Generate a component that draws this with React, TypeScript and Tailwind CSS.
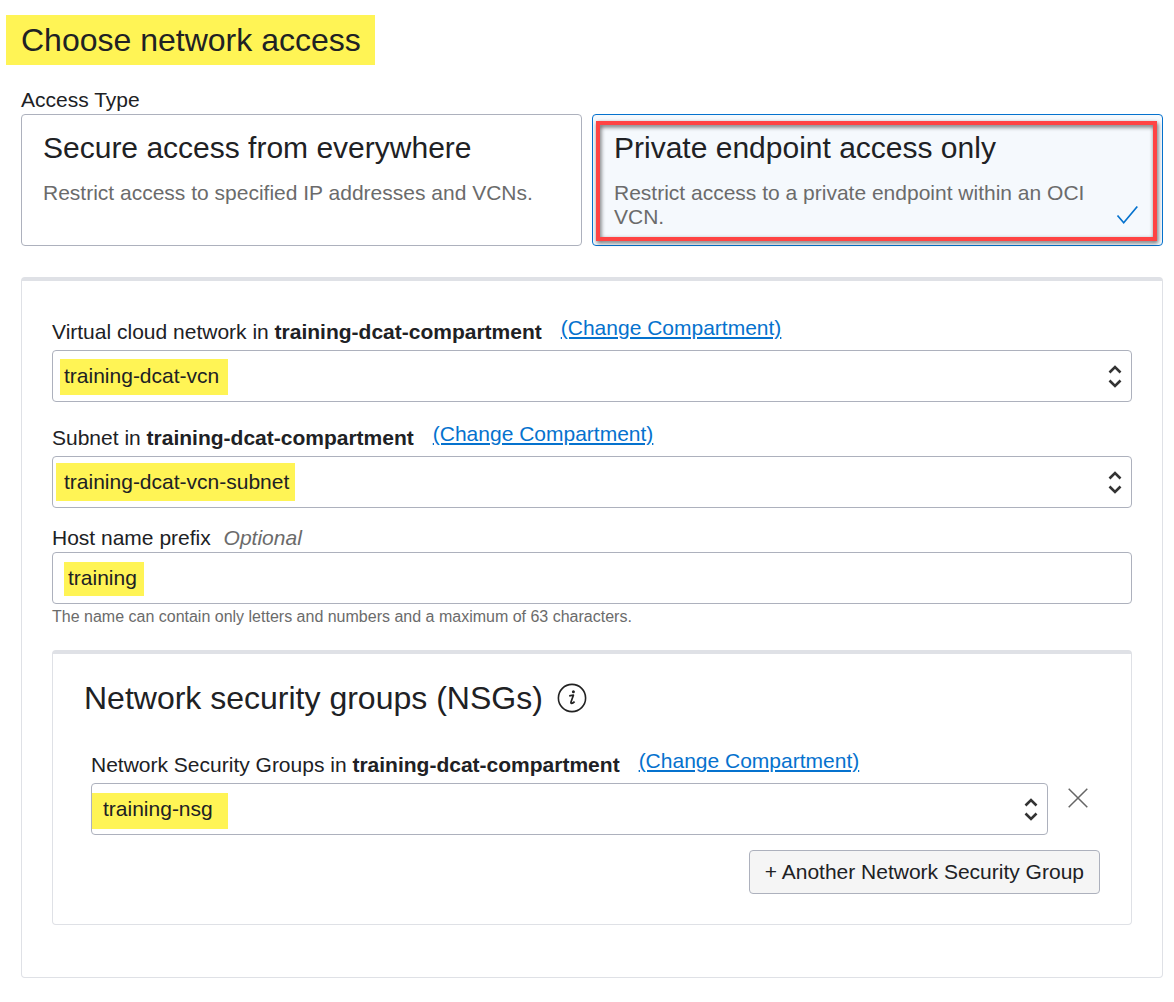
import { useState, type ReactNode } from "react";

function ChevronPair() {
  return (
    <svg
      className="pointer-events-none absolute top-1/2 right-[9px] -translate-y-1/2"
      width="16"
      height="26"
      viewBox="0 0 16 26"
      fill="none"
      stroke="#333333"
      strokeWidth="2.6"
      aria-hidden="true"
    >
      <path d="M2.5 9.5 L8 4 L13.5 9.5" />
      <path d="M2.5 17.5 L8 23 L13.5 17.5" />
    </svg>
  );
}

function CheckIcon() {
  return (
    <svg
      className="absolute right-6 bottom-5"
      width="22"
      height="20"
      viewBox="0 0 22 20"
      fill="none"
      stroke="#0572ce"
      strokeWidth="1.7"
      aria-hidden="true"
    >
      <path d="M1.5 10.5 L7.7 17.7 L21.3 1.5" />
    </svg>
  );
}

function InfoIcon() {
  return (
    <svg width="30" height="30" viewBox="0 0 30 30" fill="none" aria-hidden="true">
      <circle cx="15" cy="15" r="13.6" stroke="#222222" strokeWidth="1.6" />
      <circle cx="16.4" cy="8.8" r="1.5" fill="#222222" />
      <path
        d="M12.2 12.8 L16.4 12.2 L14 19 C13.5 20.8 15.2 20.9 17.6 18.6"
        stroke="#222222"
        strokeWidth="1.7"
        strokeLinejoin="round"
      />
    </svg>
  );
}

function CloseIcon() {
  return (
    <svg width="20" height="20" viewBox="0 0 20 20" stroke="#666666" strokeWidth="1.5" aria-hidden="true">
      <path d="M0.7 0.7 L19.3 19.3 M19.3 0.7 L0.7 19.3" />
    </svg>
  );
}

type CompartmentSelectProps = {
  id: string;
  label: string;
  value: string;
  highlight: string;
};

function CompartmentSelect({ id, label, value, highlight }: CompartmentSelectProps) {
  return (
    <div>
      <div className="flex h-[34px] items-start gap-[19px]">
        <label htmlFor={id} className="pt-1">
          {label} in <strong className="font-bold">training-dcat-compartment</strong>
        </label>
        <a href="#" className="text-[#0572ce] underline decoration-2 underline-offset-2">
          (Change Compartment)
        </a>
      </div>
      <div className="relative">
        <select
          id={id}
          defaultValue={value}
          className={`block h-[52px] w-full appearance-none rounded border border-[#adb1bd] bg-white bg-[linear-gradient(#fff455,#fff455)] bg-no-repeat pr-8 pl-[11px] ${highlight}`}
        >
          <option>{value}</option>
        </select>
        <ChevronPair />
      </div>
    </div>
  );
}

type AccessCardProps = {
  title: string;
  description: string;
  checked: boolean;
  onSelect: () => void;
  children?: ReactNode;
};

function AccessCard({ title, description, checked, onSelect, children }: AccessCardProps) {
  return (
    <label
      className={`relative block min-h-[132px] cursor-pointer rounded border pt-[13px] pr-11 pb-4 pl-[21px] ${
        checked ? "border-[#0572ce] bg-[#f5f9fd]" : "border-[#adb1bd] bg-white"
      }`}
    >
      <input type="radio" name="access-type" className="sr-only" checked={checked} onChange={onSelect} />
      <span className="block text-[30px] leading-10">{title}</span>
      <span className="mt-[13px] block text-[#6b6b6b]">{description}</span>
      {checked && <CheckIcon />}
      {children}
    </label>
  );
}

export default function App() {
  const [access, setAccess] = useState("private");

  return (
    <main className="bg-white pt-[15px] pr-[11px] pb-6 pl-[21px] font-['Liberation_Sans',Arial,sans-serif] text-[21px] leading-6 text-[#202124]">
      <h1 className="-ml-[15px] w-fit bg-[#fff455] pr-[14px] pl-[15px] text-[32px] leading-[50px]">
        Choose network access
      </h1>

      <fieldset className="mt-[23px]">
        <legend className="h-[26px]">Access Type</legend>
        <div className="grid grid-cols-[561fr_571fr] gap-[10px]">
          <AccessCard
            title="Secure access from everywhere"
            description="Restrict access to specified IP addresses and VCNs."
            checked={access === "everywhere"}
            onSelect={() => setAccess("everywhere")}
          />
          <AccessCard
            title="Private endpoint access only"
            description="Restrict access to a private endpoint within an OCI VCN."
            checked={access === "private"}
            onSelect={() => setAccess("private")}
          >
            <span className="pointer-events-none absolute top-[6px] right-[5px] bottom-1 left-[3px] border-4 border-[#ff4444] drop-shadow-[1px_2px_2px_rgba(0,0,0,0.6)]" />
          </AccessCard>
        </div>
      </fieldset>

      <section className="mt-[31px] rounded border border-t-4 border-[#dfe1e6] px-[30px] pt-[35px] pb-[52px]">
        <CompartmentSelect
          id="vcn"
          label="Virtual cloud network"
          value="training-dcat-vcn"
          highlight="bg-size-[168px_36px] bg-position-[7px_8px]"
        />
        <div className="mt-5">
          <CompartmentSelect
            id="subnet"
            label="Subnet"
            value="training-dcat-vcn-subnet"
            highlight="bg-size-[239px_38px] bg-position-[3px_6px]"
          />
        </div>

        <div className="mt-[18px]">
          <label htmlFor="host" className="block h-[26px]">
            Host name prefix <em className="ml-[7px] text-[#6b6b6b]">Optional</em>
          </label>
          <input
            id="host"
            type="text"
            defaultValue="training"
            aria-describedby="host-hint"
            className="block h-[52px] w-full rounded border border-[#adb1bd] bg-white bg-[linear-gradient(#fff455,#fff455)] bg-size-[80px_34px] bg-position-[11px_9px] bg-no-repeat px-[15px]"
          />
          <p id="host-hint" className="pt-px text-base leading-6 text-[#6b6b6b]">
            The name can contain only letters and numbers and a maximum of 63 characters.
          </p>
        </div>

        <section className="mt-[21px] rounded border border-t-4 border-[#dfe1e6] pt-6 pr-[31px] pb-[30px] pl-[31px]">
          <div className="flex items-center gap-[14px]">
            <h2 className="text-[32px] leading-10">Network security groups (NSGs)</h2>
            <button type="button" aria-label="About network security groups">
              <InfoIcon />
            </button>
          </div>
          <div className="mt-[31px] flex items-start gap-5 pl-[7px]">
            <div className="flex-1">
              <CompartmentSelect
                id="nsg"
                label="Network Security Groups"
                value="training-nsg"
                highlight="bg-size-[136px_36px] bg-position-[0px_9px]"
              />
            </div>
            <button type="button" aria-label="Remove network security group" className="mt-[39px] mr-3">
              <CloseIcon />
            </button>
          </div>
          <div className="mt-[15px] flex justify-end">
            <button type="button" className="h-11 rounded border border-[#adb1bd] bg-[#f5f5f5] px-[15px]">
              + Another Network Security Group
            </button>
          </div>
        </section>
      </section>
    </main>
  );
}
